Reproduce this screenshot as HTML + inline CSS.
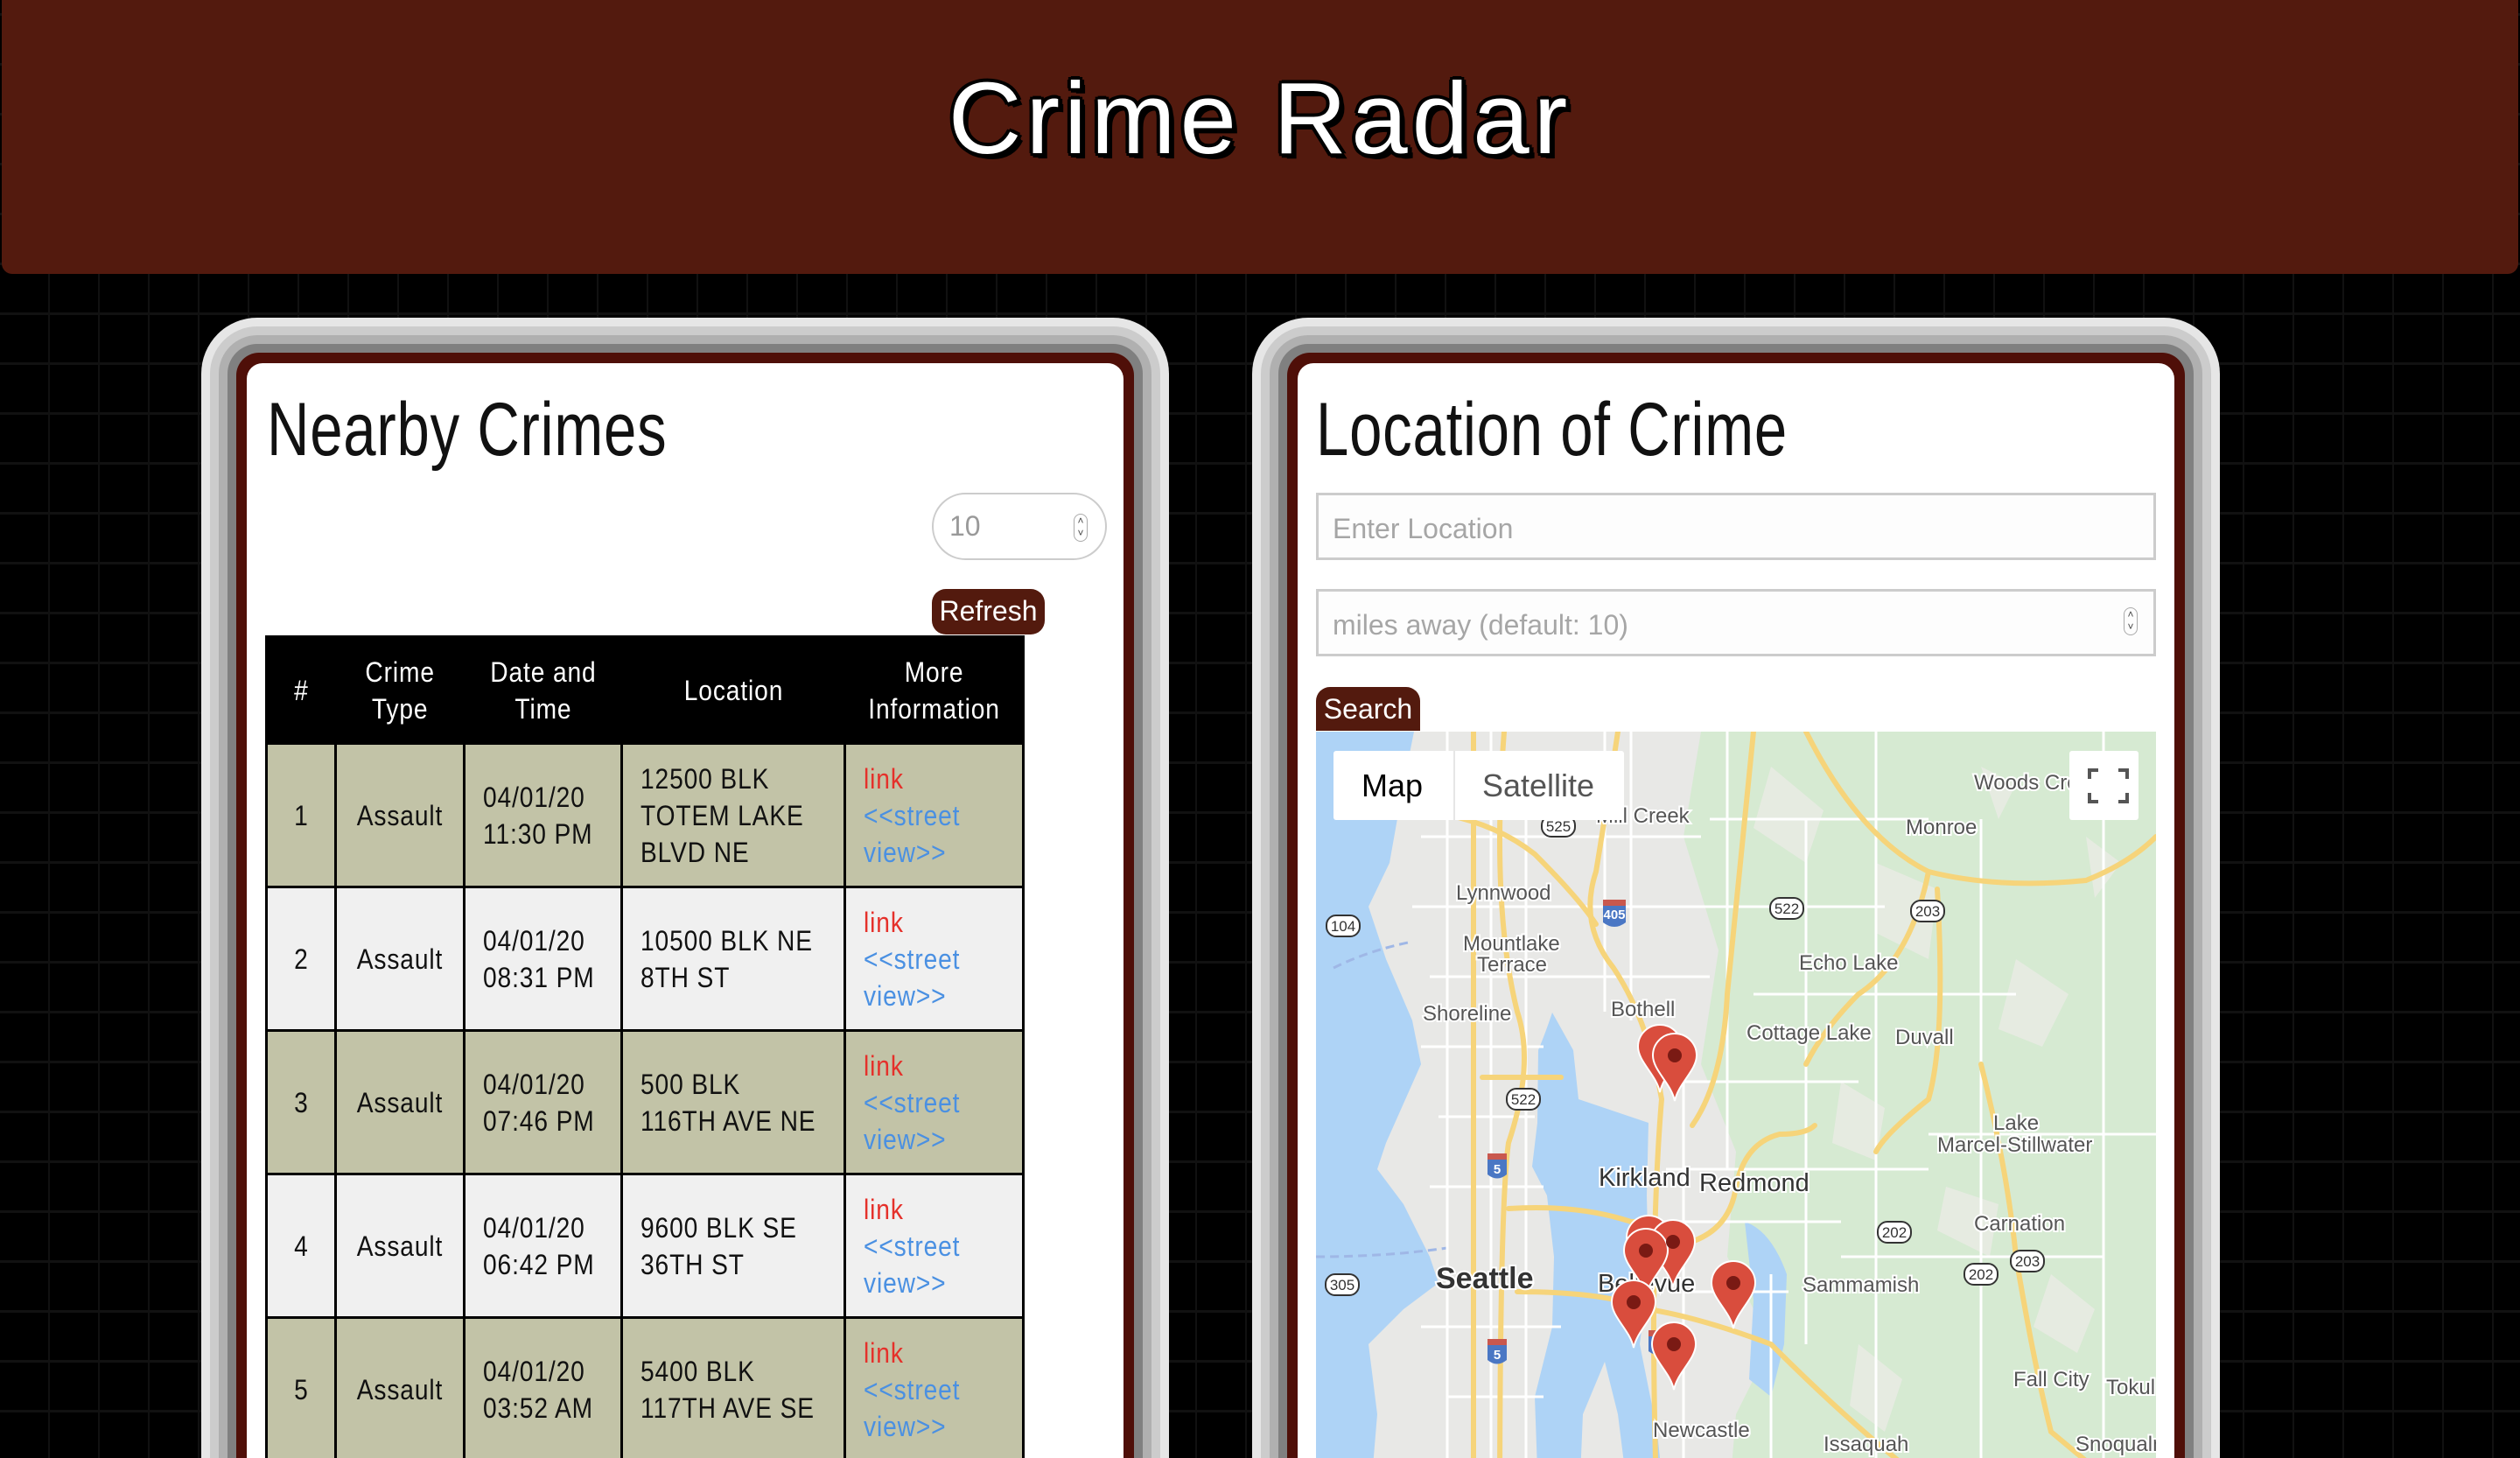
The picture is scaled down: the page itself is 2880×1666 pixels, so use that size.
<!DOCTYPE html>
<html><head><meta charset="utf-8">
<style>
*{margin:0;padding:0;box-sizing:border-box}
html,body{width:2880px;height:1666px;overflow:hidden}
body{position:relative;background-color:#000;
background-image:repeating-linear-gradient(90deg,transparent 0 55px,#111 55px 58px,transparent 58px 57px),repeating-linear-gradient(0deg,transparent 0 54px,#111 54px 57px);
background-size:57px 57px,57px 57px;background-position:0 0,0 15px;
font-family:"Liberation Sans",sans-serif}
.hdr{position:absolute;left:2px;top:0;width:2876px;height:313px;background:#531a0e;border-radius:0 0 12px 12px}
.title{position:absolute;left:0;width:2880px;top:70px;text-align:center;font-family:"Liberation Sans",sans-serif;font-size:116px;letter-spacing:5px;color:#fff;line-height:130px;
text-shadow:4px 4px 0 #000,-3px 3px 0 #000,3px -3px 0 #000,-3px -3px 0 #000,6px 6px 0 #000,0 5px 0 #000,5px 0 0 #000,-4px 0 0 #000,0 -4px 0 #000}
.panel{position:absolute;top:363px;width:1106px;height:1400px;border-radius:64px;background:#e6e6e6;padding:10px}
.b2{background:#ccc;border-radius:54px;padding:10px;height:100%}
.b3{background:#b0b0b0;border-radius:44px;padding:10px;height:100%}
.b4{background:#808080;border-radius:34px;padding:10px;height:100%}
.b5{background:#4f0f08;border-radius:26px;padding:12px;height:100%}
.white{background:#fff;border-radius:18px;height:100%;position:relative}
h2{position:absolute;font-weight:normal;font-size:86px;color:#111;letter-spacing:1px;top:26px;line-height:100px;transform:scaleX(0.78);transform-origin:0 0;white-space:nowrap}
.numin{position:absolute;left:783px;top:148px;width:200px;height:77px;border:2px solid #ccc;border-radius:40px;font-size:32px;color:#999;padding:18px 0 0 18px;background:#fff}
.spin{position:absolute;right:20px;top:22px;width:16px;height:32px;border:1px solid #aaa;border-radius:8px;font-size:12px;line-height:14px;text-align:center;color:#444}
.btn{position:absolute;background:#531a0e;color:#fff;font-size:32px;border-radius:16px;text-align:center;line-height:50px}
table{position:absolute;left:21px;top:311px;border-collapse:collapse;table-layout:fixed;width:865px}
td,th{border:3px solid #000;font-size:32px;letter-spacing:1px;line-height:42px;white-space:nowrap;color:#111;font-weight:normal;overflow:hidden}
td span.s,th span.s{display:inline-block;transform:scaleX(0.88);transform-origin:0 50%}
th span.s,td.c span.s{transform-origin:50% 50%}
th{background:#000;color:#fff;height:122px;text-align:center}
td{height:164px;padding-left:20px}
tr.o td{background:#c2c3a7}tr.e td{background:#f0f0f0}
td.c{text-align:center;padding-left:0}
.lk{color:#e5302a}.sv{color:#4a90e2}
.inp{position:absolute;left:21px;width:960px;height:77px;border:3px solid #ccc;background:#fdfdfd;font-size:32px;color:#a6a6a6;padding:20px 0 0 16px}
.map{position:absolute;left:21px;top:421px;width:960px;height:900px;overflow:hidden;background:#e8e8e6}
</style></head><body>
<div class="hdr"></div>
<div class="title">Crime Radar</div>

<div class="panel" style="left:230px"><div class="b2"><div class="b3"><div class="b4"><div class="b5"><div class="white">
<h2 style="left:23px">Nearby Crimes</h2>
<div class="numin">10<div class="spin">˄<br>˅</div></div>
<div class="btn" style="left:783px;top:258px;width:129px;height:52px">Refresh</div>
<table>
<colgroup><col style="width:79px"><col style="width:147px"><col style="width:180px"><col style="width:255px"><col style="width:204px"></colgroup>
<tr><th><span class="s">#</span></th><th><span class="s">Crime<br>Type</span></th><th><span class="s">Date and<br>Time</span></th><th><span class="s">Location</span></th><th><span class="s">More<br>Information</span></th></tr>
<tr class="o"><td class="c"><span class="s">1</span></td><td class="c"><span class="s">Assault</span></td><td><span class="s">04/01/20<br>11:30 PM</span></td><td><span class="s">12500 BLK<br>TOTEM LAKE<br>BLVD NE</span></td><td><span class="s"><span class="lk">link</span><br><span class="sv">&lt;&lt;street<br>view&gt;&gt;</span></span></td></tr>
<tr class="e"><td class="c"><span class="s">2</span></td><td class="c"><span class="s">Assault</span></td><td><span class="s">04/01/20<br>08:31 PM</span></td><td><span class="s">10500 BLK NE<br>8TH ST</span></td><td><span class="s"><span class="lk">link</span><br><span class="sv">&lt;&lt;street<br>view&gt;&gt;</span></span></td></tr>
<tr class="o"><td class="c"><span class="s">3</span></td><td class="c"><span class="s">Assault</span></td><td><span class="s">04/01/20<br>07:46 PM</span></td><td><span class="s">500 BLK<br>116TH AVE NE</span></td><td><span class="s"><span class="lk">link</span><br><span class="sv">&lt;&lt;street<br>view&gt;&gt;</span></span></td></tr>
<tr class="e"><td class="c"><span class="s">4</span></td><td class="c"><span class="s">Assault</span></td><td><span class="s">04/01/20<br>06:42 PM</span></td><td><span class="s">9600 BLK SE<br>36TH ST</span></td><td><span class="s"><span class="lk">link</span><br><span class="sv">&lt;&lt;street<br>view&gt;&gt;</span></span></td></tr>
<tr class="o"><td class="c"><span class="s">5</span></td><td class="c"><span class="s">Assault</span></td><td><span class="s">04/01/20<br>03:52 AM</span></td><td><span class="s">5400 BLK<br>117TH AVE SE</span></td><td><span class="s"><span class="lk">link</span><br><span class="sv">&lt;&lt;street<br>view&gt;&gt;</span></span></td></tr>
</table>
</div></div></div></div></div></div>

<div class="panel" style="left:1431px"><div class="b2"><div class="b3"><div class="b4"><div class="b5"><div class="white">
<h2 style="left:21px">Location of Crime</h2>
<div class="inp" style="top:148px">Enter Location</div>
<div class="inp" style="top:258px">miles away (default: 10)<div class="spin" style="right:18px;top:18px">˄<br>˅</div></div>
<div class="btn" style="left:21px;top:370px;width:119px;height:50px;border-radius:16px 16px 0 0">Search</div>
<div class="map">
<svg width="960" height="900" viewBox="0 0 960 900" font-family="Liberation Sans, sans-serif">
<rect width="960" height="900" fill="#e8e8e6"/>
<path d="M440 0H960V900H470L480 780 520 700 470 600 480 480 440 380 460 250 420 120Z" fill="#d6ead2"/>
<path d="M520 40l60 50-20 60-60-40zM640 150l70 30-10 80-60-30zM800 260l60 40-30 60-50-20zM600 400l50 30-10 60-50-20zM720 520l60 20-10 60-60-30zM840 620l50 40-20 50-50-30zM620 700l50 40-20 60-40-30zM760 40l40 20-20 40zM880 120l40 30-30 40z" fill="#e6ebe1"/>
<path d="M0 0H112L100 60 84 150 60 200 80 260 110 330 120 380 80 470 70 500 100 540 130 600 140 630 100 660 60 700 70 780 60 900H0Z" fill="#aed3f6"/>
<path d="M270 321Q262 345 254 364L253 447 247 497 264 530 272 600 270 680 250 760 255 900H300L305 780 330 720 345 780 360 900H400L390 800 370 700 380 620 378 530 380 447 300 420 294 364Z" fill="#aed3f6"/>
<path d="M490 560Q520 570 538 620L535 700 520 760 495 740 500 650Z" fill="#aed3f6"/>
<path d="M20 270Q60 250 110 240M0 600Q80 600 150 590" stroke="#9fb7e6" stroke-width="3" stroke-dasharray="10 6" fill="none"/>
<g stroke="#fff" stroke-width="3" fill="none">
<path d="M120 120H440M110 200H420M130 280H450M120 360H260M140 440H250M130 520H260M120 680H280M150 760H260M400 500H700M420 400H620M380 560H600M420 640H540M400 200H650M450 100H700M500 300H800M600 600H900M700 460H960M150 0V900M200 0V900M240 100V900M330 0V320M360 0V330M420 380V900M470 0V500M560 100V700M640 0V900M760 100V900M900 0V900M520 620V900"/>
</g>
<g stroke="#f6d47a" stroke-width="6" fill="none" stroke-linecap="round">
<path d="M180 0V900"/>
<path d="M215 0Q200 200 230 320 250 380 220 470 210 540 210 900"/>
<path d="M345 0Q330 100 320 160 300 220 340 270 380 330 395 420 380 600 390 900"/>
<path d="M120 90Q200 100 250 140 300 190 320 220"/>
<path d="M500 0Q480 200 470 300 465 400 430 450"/>
<path d="M190 395Q240 395 280 395"/>
<path d="M220 545Q300 540 360 560 380 560 380 560"/>
<path d="M230 640Q330 640 380 660 440 670 520 700 620 800 700 860 800 880 960 900"/>
<path d="M380 590Q470 590 480 520 490 470 530 460 560 460 570 450"/>
<path d="M560 0Q620 120 700 160 780 180 880 170 930 150 960 120"/>
<path d="M700 160Q680 260 620 300 580 340 560 380"/>
<path d="M710 180Q720 350 700 420 650 460 640 480"/>
<path d="M760 380Q790 500 800 600 820 720 840 800 900 850 960 900"/>
</g>
<g font-size="24" fill="#555" stroke="#fff" stroke-width="4" paint-order="stroke">
<text x="320" y="104">Mill Creek</text>
<text x="752" y="66">Woods Cre</text>
<text x="674" y="117">Monroe</text>
<text x="160" y="192">Lynnwood</text>
<text x="168" y="250">Mountlake</text>
<text x="184" y="274">Terrace</text>
<text x="552" y="272">Echo Lake</text>
<text x="122" y="330">Shoreline</text>
<text x="337" y="325">Bothell</text>
<text x="492" y="352">Cottage Lake</text>
<text x="662" y="357">Duvall</text>
<text x="774" y="455">Lake</text>
<text x="710" y="480">Marcel-Stillwater</text>
<text x="752" y="570">Carnation</text>
<text x="556" y="640">Sammamish</text>
<text x="797" y="748">Fall City</text>
<text x="903" y="757">Tokul</text>
<text x="385" y="806">Newcastle</text>
<text x="580" y="822">Issaquah</text>
<text x="868" y="822">Snoqualm</text>
</g>
<g font-size="29" fill="#333" stroke="#fff" stroke-width="4" paint-order="stroke">
<text x="323" y="519">Kirkland</text><text x="438" y="525">Redmond</text><text x="322" y="640">Bellevue</text>
<text x="137" y="636" font-size="34" font-weight="bold">Seattle</text>
</g>
<g font-size="17" fill="#333" text-anchor="middle">
<g stroke="#333" stroke-width="2" fill="#fff"><rect x="258" y="96" width="38" height="24" rx="11"/><rect x="12" y="210" width="38" height="24" rx="11"/><rect x="519" y="190" width="38" height="24" rx="11"/><rect x="680" y="193" width="38" height="24" rx="11"/><rect x="218" y="408" width="38" height="24" rx="11"/><rect x="642" y="560" width="38" height="24" rx="11"/><rect x="11" y="620" width="38" height="24" rx="11"/><rect x="741" y="608" width="38" height="24" rx="11"/><rect x="794" y="593" width="38" height="24" rx="11"/></g>
<text x="277" y="114">525</text><text x="31" y="228">104</text><text x="538" y="208">522</text><text x="699" y="211">203</text><text x="237" y="426">522</text><text x="661" y="578">202</text><text x="30" y="638">305</text><text x="760" y="626">202</text><text x="813" y="611">203</text>
<g fill="#4a77c4"><path d="M328 198h26v20q-13 10-26 0z"/><path d="M196 488h22v18q-11 9-22 0z"/><path d="M196 700h22v18q-11 9-22 0z"/><path d="M380 690h24v18q-12 9-24 0z"/></g>
<g fill="#c9584e"><rect x="328" y="192" width="26" height="7"/><rect x="196" y="482" width="22" height="7"/><rect x="196" y="694" width="22" height="7"/><rect x="380" y="684" width="24" height="7"/></g>
<g fill="#fff" font-weight="bold" font-size="15"><text x="341" y="214">405</text><text x="207" y="505">5</text><text x="207" y="717">5</text><text x="392" y="706">90</text></g>
</g>
<g fill="#d94d3d" stroke="#fff" stroke-width="2">
<path d="M0 0C-4-20-25-35-25-52A25 25 0 1 1 25-52C25-35 4-20 0 0Z" transform="translate(393 412)"/>
<path d="M0 0C-4-20-25-35-25-52A25 25 0 1 1 25-52C25-35 4-20 0 0Z" transform="translate(410 422)"/>
<path d="M0 0C-4-20-25-35-25-52A25 25 0 1 1 25-52C25-35 4-20 0 0Z" transform="translate(380 630)"/>
<path d="M0 0C-4-20-25-35-25-52A25 25 0 1 1 25-52C25-35 4-20 0 0Z" transform="translate(408 635)"/>
<path d="M0 0C-4-20-25-35-25-52A25 25 0 1 1 25-52C25-35 4-20 0 0Z" transform="translate(377 645)"/>
<path d="M0 0C-4-20-25-35-25-52A25 25 0 1 1 25-52C25-35 4-20 0 0Z" transform="translate(363 704)"/>
<path d="M0 0C-4-20-25-35-25-52A25 25 0 1 1 25-52C25-35 4-20 0 0Z" transform="translate(477 682)"/>
<path d="M0 0C-4-20-25-35-25-52A25 25 0 1 1 25-52C25-35 4-20 0 0Z" transform="translate(409 752)"/>
</g>
<g fill="#7a1a14"><circle cx="410" cy="370" r="8"/><circle cx="408" cy="583" r="8"/><circle cx="377" cy="593" r="8"/><circle cx="363" cy="652" r="8"/><circle cx="477" cy="630" r="8"/><circle cx="409" cy="700" r="8"/></g>
<rect x="20" y="22" width="332" height="79" fill="#fff" rx="3"/>
<line x1="158" y1="22" x2="158" y2="101" stroke="#e6e6e6" stroke-width="2"/>
<text x="52" y="74" font-size="36" fill="#000">Map</text>
<text x="190" y="74" font-size="36" fill="#555">Satellite</text>
<rect x="861" y="22" width="79" height="79" fill="#fff" rx="3"/>
<path d="M884 54v-10h10M917 44h10v10M927 70v10h-10M894 80h-10v-10" stroke="#555" stroke-width="4" fill="none"/>
</svg>
</div>
</div></div></div></div></div></div>
</body></html>
